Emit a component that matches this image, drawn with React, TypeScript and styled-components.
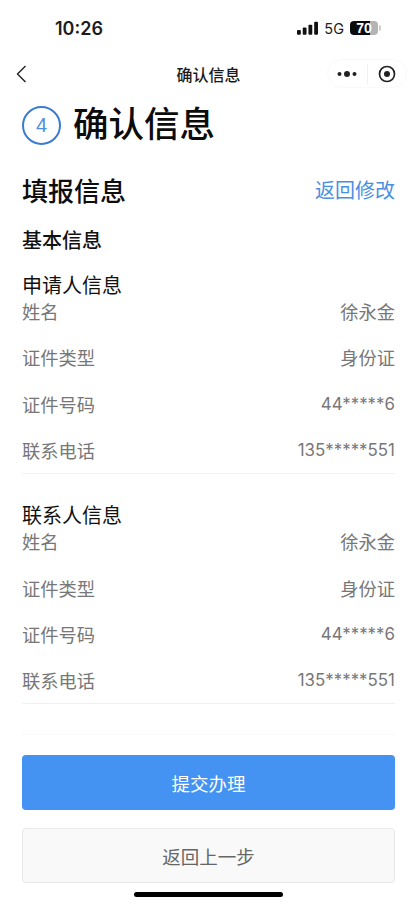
import { createGlobalStyle } from "styled-components";
import styled from "styled-components";

const Global = createGlobalStyle`
  html, body {
    margin: 0;
    padding: 0;
    background: #fff;
  }
  body {
    font-family: "Liberation Sans", "Noto Sans CJK SC", sans-serif;
  }
`;

const Page = styled.div`
  width: 417px;
  height: 905px;
  overflow: hidden;
  position: relative;
  display: flex;
  flex-direction: column;
`;

const StatusBar = styled.div`
  height: 56px;
  padding: 0 39px 0 55px;
  box-sizing: border-box;
  display: flex;
  align-items: center;
  justify-content: space-between;
`;

const Time = styled.span`
  font-family: "Inter", sans-serif;
  font-size: 18px;
  font-weight: 600;
  color: #1c1c1e;
`;

const StatusRight = styled.div`
  display: flex;
  align-items: center;
  gap: 6px;
`;

const Net = styled.span`
  font-family: "Inter", sans-serif;
  font-size: 14.5px;
  color: #222;
`;

const Battery = styled.div`
  width: 28px;
  height: 14px;
  border-radius: 4px;
  background: linear-gradient(90deg, #0c0c0c 0 70%, #b4b4b4 70% 100%);
  color: #fff;
  font-size: 14px;
  font-weight: 700;
  line-height: 14px;
  text-align: center;
  position: relative;
  &::after {
    content: "";
    position: absolute;
    right: -3px;
    top: 4px;
    width: 2px;
    height: 6px;
    border-radius: 0 2px 2px 0;
    background: #ccc;
  }
`;

const Nav = styled.div`
  height: 36px;
  position: relative;
  display: flex;
  align-items: center;
  justify-content: center;
`;

const NavTitle = styled.div`
  font-size: 16px;
  font-weight: 500;
  color: #1a1a1a;
`;

const Back = styled.svg`
  position: absolute;
  left: 15px;
  top: 8px;
`;

const Capsule = styled.div`
  position: absolute;
  right: 10px;
  top: 3px;
  width: 80px;
  height: 29px;
  border: 1px solid #f9f9f9;
  border-radius: 15px;
  box-sizing: border-box;
  display: flex;
  align-items: center;
`;

const CapsuleSlot = styled.div`
  flex: 1;
  display: flex;
  align-items: center;
  justify-content: center;
  height: 20px;
  & + & {
    border-left: 1px solid #f1f1f1;
  }
`;

const Body = styled.div`
  padding: 0 22px;
  display: flex;
  flex-direction: column;
`;

const StepRow = styled.div`
  margin-top: 9px;
  height: 48px;
  display: flex;
  align-items: center;
  gap: 12px;
`;

const StepNum = styled.div`
  width: 39px;
  height: 39px;
  box-sizing: border-box;
  border: 2px solid #3a7bd5;
  border-radius: 50%;
  color: #4a90e2;
  font-size: 20px;
  display: flex;
  align-items: center;
  justify-content: center;
`;

const StepTitle = styled.div`
  font-size: 35.5px;
  font-weight: 500;
  color: #0c0c0c;
  line-height: 48px;
`;

const SectionHead = styled.div`
  margin-top: 20px;
  height: 40px;
  display: flex;
  align-items: center;
  justify-content: space-between;
`;

const SectionTitle = styled.div`
  font-size: 26px;
  font-weight: 500;
  color: #0e0e0e;
`;

const EditLink = styled.div`
  font-size: 20px;
  color: #4a90e2;
`;

const Basic = styled.div`
  margin-top: 17px;
  height: 30px;
  line-height: 30px;
  font-size: 20px;
  font-weight: 500;
  color: #111;
`;

const GroupTitle = styled.div<{ $top: number }>`
  margin-top: ${(p) => p.$top}px;
  height: 26px;
  line-height: 26px;
  font-size: 20px;
  color: #111;
`;

const Group = styled.div`
  display: flex;
  flex-direction: column;
  gap: 22.4px;
  padding: 0 0 11px;
  border-bottom: 1px solid #f1f1f1;
`;

const Row = styled.div`
  height: 24px;
  display: flex;
  align-items: center;
  justify-content: space-between;
  font-size: 18.3px;
  color: #777;
`;

const MaskedValue = styled.span`
  font-family: "Inter", sans-serif;
  font-size: 16.9px;
`;

const Rule = styled.div`
  margin-top: 30px;
  height: 1px;
  background: #f8f8f8;
`;

const Primary = styled.div`
  margin-top: 20px;
  height: 55px;
  border-radius: 4px;
  background: #4492f1;
  color: #fff;
  font-size: 18.5px;
  display: flex;
  align-items: center;
  justify-content: center;
`;

const Secondary = styled.div`
  margin-top: 18px;
  height: 55px;
  box-sizing: border-box;
  border: 1px solid #e8e8e8;
  border-radius: 4px;
  background: #f9f9f9;
  color: #666;
  font-size: 18.5px;
  display: flex;
  align-items: center;
  justify-content: center;
`;

const HomeBar = styled.div`
  position: absolute;
  left: 134px;
  top: 892px;
  width: 149px;
  height: 5px;
  border-radius: 3px;
  background: #000;
`;

function InfoRows() {
  return (
    <Group>
      <Row>
        <span>姓名</span>
        <span>徐永金</span>
      </Row>
      <Row>
        <span>证件类型</span>
        <span>身份证</span>
      </Row>
      <Row>
        <span>证件号码</span>
        <MaskedValue>44*****6</MaskedValue>
      </Row>
      <Row>
        <span>联系电话</span>
        <MaskedValue>135*****551</MaskedValue>
      </Row>
    </Group>
  );
}

export default function App() {
  return (
    <Page>
      <Global />
      <StatusBar>
        <Time>10:26</Time>
        <StatusRight>
          <svg width="21" height="14" viewBox="0 0 22 14">
            <rect x="0" y="9" width="4" height="5" rx="1" fill="#111" />
            <rect x="6" y="6.5" width="4" height="7.5" rx="1" fill="#111" />
            <rect x="12" y="3.5" width="4" height="10.5" rx="1" fill="#111" />
            <rect x="18" y="0.5" width="4" height="13.5" rx="1" fill="#111" />
          </svg>
          <Net>5G</Net>
          <Battery>70</Battery>
        </StatusRight>
      </StatusBar>
      <Nav>
        <Back width="14" height="20" viewBox="0 0 14 20">
          <path d="M10.5 2 L2.5 10 L10.5 18" fill="none" stroke="#222" strokeWidth="1.4" />
        </Back>
        <NavTitle>确认信息</NavTitle>
        <Capsule>
          <CapsuleSlot>
            <svg width="20" height="8" viewBox="0 0 20 8">
              <circle cx="2.5" cy="4" r="2" fill="#222" />
              <circle cx="10" cy="4" r="3" fill="#222" />
              <circle cx="17.5" cy="4" r="2" fill="#222" />
            </svg>
          </CapsuleSlot>
          <CapsuleSlot>
            <svg width="18" height="18" viewBox="0 0 18 18">
              <circle cx="9" cy="9" r="7.5" fill="none" stroke="#222" strokeWidth="1.7" />
              <circle cx="9" cy="9" r="3" fill="#222" />
            </svg>
          </CapsuleSlot>
        </Capsule>
      </Nav>
      <Body>
        <StepRow>
          <StepNum>4</StepNum>
          <StepTitle>确认信息</StepTitle>
        </StepRow>
        <SectionHead>
          <SectionTitle>填报信息</SectionTitle>
          <EditLink>返回修改</EditLink>
        </SectionHead>
        <Basic>基本信息</Basic>
        <GroupTitle $top={17}>申请人信息</GroupTitle>
        <InfoRows />
        <GroupTitle $top={29}>联系人信息</GroupTitle>
        <InfoRows />
        <Rule />
        <Primary>提交办理</Primary>
        <Secondary>返回上一步</Secondary>
      </Body>
      <HomeBar />
    </Page>
  );
}
